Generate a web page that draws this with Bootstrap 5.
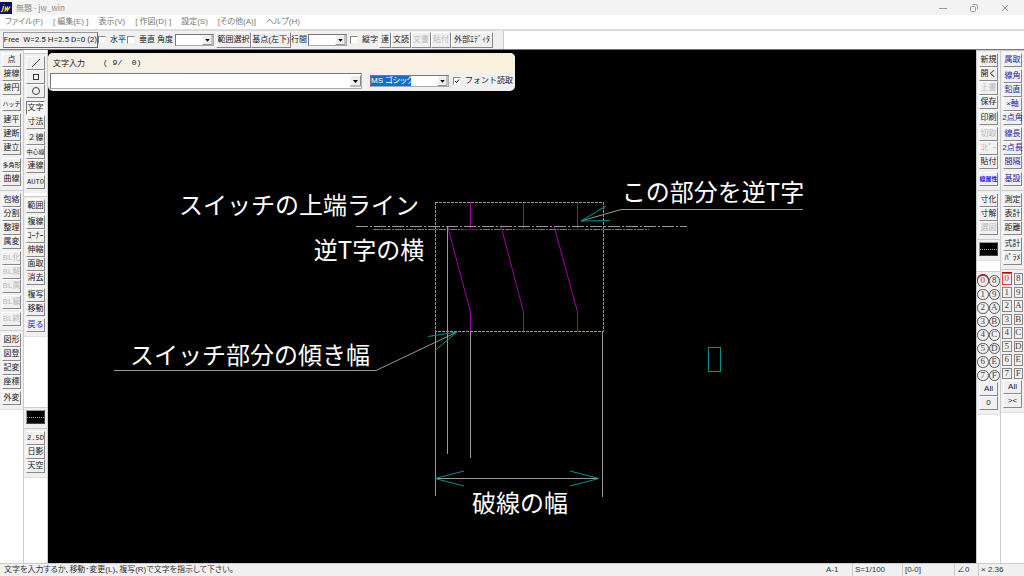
<!DOCTYPE html>
<html lang="ja">
<head>
<meta charset="utf-8">
<meta name="viewport" content="width=device-width, initial-scale=1">
<title>無題 - jw_win</title>
<link href="https://cdn.jsdelivr.net/npm/bootstrap@5.3.0/dist/css/bootstrap.min.css" rel="stylesheet">
<style>
  body { font: 8px/12px "Liberation Sans", "Noto Sans CJK JP", sans-serif; color: #222; background: #fff; }
  button, select, input { font: inherit; color: inherit; border-radius: 0; }
  .titlebar { height: 15px; background: #f3f3f3; color: #8c8c8c; font-family: "Noto Sans CJK JP", sans-serif; font-size: 8px; }
  .titlebar button { width: 31px; border: 0; padding: 0; background: none; line-height: 0; }
  .menubar { height: 14px; color: #777; gap: 10px; padding: 0 5px; font-size: 8px; font-feature-settings: "palt"; }
  .menubar a { color: inherit; text-decoration: none; white-space: pre; }

  /* bevelled push button used in every bar */
  .tool { display: flex; align-items: center; justify-content: center; height: 14px; padding: 0; white-space: nowrap; line-height: 12px;
    background: #f0f0f0; border: 1px solid; border-color: #fff #888 #888 #fff; }
  .tool:disabled { color: #bbb; }
  .tool.pressed { background: #f8f8f8; border-color: #777 #fff #fff #777; }
  .tight { font-size: 6px; }
  .fixed-pitch { font-family: "Liberation Mono", monospace; font-size: 7px; }
  .gap-above { margin-top: 2px; }
  .gap-above-3 { margin-top: 3px; }
  .ink-blue { color: #1c1ca8; }
  .ink-bright { color: #2020ff; }

  .topbar { height: 21px; border-top: 2px solid #dcdcdc; border-bottom: 1px solid #777; }
  .topbar-grid { display: grid; align-items: center; padding: 0 10px 0 3px; background: #f0f0f0; border-right: 1px solid #ccc;
    grid-template-columns: 95px 29px 30px 18px 41px 35px 40px 17px 42px 29px 12px 20px 20px 20px 42px; }
  .topbar .tool { height: 16px; }
  .topbar label { display: flex; align-items: center; gap: 4px; white-space: nowrap; }
  .text-style { font-family: Roboto, sans-serif; border-color: #999 #666 #666 #999; }
  .tick { appearance: none; flex: none; width: 8px; height: 8px; margin: 0; background: #fff; border: 1px solid; border-color: #888 #eee #eee #888; }
  .tick:checked { background: #fff url("data:image/svg+xml,%3Csvg xmlns='http://www.w3.org/2000/svg' viewBox='0 0 6 6'%3E%3Cpath d='M1 3l1.5 1.5L5 1.5' fill='none' stroke='%23000'/%3E%3C/svg%3E") center / contain no-repeat; }
  .combo { appearance: none; width: 39px; height: 12px; padding: 0; border: 1px solid; border-color: #777 #aaa #aaa #777; line-height: 10px;
    background: #fff url("data:image/svg+xml,%3Csvg xmlns='http://www.w3.org/2000/svg' viewBox='0 0 11 11'%3E%3Cpath d='M0 0h11v11H0z' fill='%23eee'/%3E%3Cpath d='M0 11V0h11' fill='none' stroke='%23fff'/%3E%3Cpath d='M0 10.5h10.5V0' fill='none' stroke='%23888'/%3E%3Cpath d='M3 4.500h5l-2.500 3z'/%3E%3C/svg%3E") right center / 11px 100% no-repeat; }

  .workspace { flex: 1; min-height: 0; }
  .side { width: 24px; border-right: 1px solid #ccc; }
  .side-right { border-right: 0; border-left: 1px solid #ccc; }
  .toolset { background: #f0f0f0; border-top: 1px solid #ccc; padding: 2px 2px 4px 2px; }
  .toolset .tool { width: 100%; }
  .spaced { margin-top: 3px; }
  .void { height: 70px; }
  .void-small { height: 10px; }
  .line-style { width: 100%; height: 14px; padding: 0; background: #000; border: 1px solid; border-color: #999 #444 #444 #999; display: flex; align-items: center; }
  .line-style span { width: 100%; border-top: 1px dotted #aaa; }
  .layers { display: grid; grid-template: repeat(8, minmax(0, 1fr)) / 1fr 1fr; height: 108px; margin: 0 -2px; font-family: "Liberation Serif", serif; font-size: 9px; }
  .layers button { min-height: 0; padding: 0; line-height: 9px; background: #f0f0f0; color: #444; border: 1px solid #888; margin: 1px; }
  .layers.round button { border-radius: 50%; border-color: #555; margin: 1px 0; }
  .layers .active { color: #e02020; border-color: #f04040; box-shadow: 0 -1px #c00000; }

  .stage { flex: 1; min-width: 0; background: #000; }
  .stage svg { width: 100%; height: 100%; display: block; }
  .stage text { font: 400 24px "Noto Sans CJK JP", sans-serif; fill: #fff; text-anchor: middle; }
  .text-dialog { top: 3px; left: 0; width: 467px; height: 38px; border-radius: 5px; background: #f0f0f0; overflow: hidden; }
  .dialog-title { height: 20px; padding: 0 5px; font-family: "Noto Sans CJK JP", sans-serif; background: linear-gradient(90deg, #f4f1e4, #faf0e6 60%, #f8f2dc); white-space: pre; }
  .char-count { font-family: "Liberation Mono", monospace; margin-left: 18px; }
  .dialog-row { padding: 0 2px; }
  .entry { width: 313px; height: 16px; }
  .font-pick { width: 79px; color: #fff; background-color: transparent; font-feature-settings: "palt"; }
  .font-wrap { background: linear-gradient(90deg, #0f6fd0 41px, #fff 41px); }

  .statusbar { height: 13px; background: #f0f0f0; border-top: 1px solid #ccc; font-feature-settings: "palt"; color: #333; }
  .statusbar div + div { border-left: 1px solid #ccc; padding-left: 2px; }
  .pane-a { width: 28px; }
  .pane-b { width: 50px; }
  .pane-c { width: 52px; }
  .pane-d { width: 24px; }
  .pane-e { width: 46px; }
</style>
</head>
<body>
<div class="d-flex flex-column vh-100 overflow-hidden">
  <header class="titlebar d-flex align-items-center">
    <svg width="12" height="12" viewBox="0 0 12 12" aria-hidden="true"><rect width="12" height="12" fill="#0a0a70"/><path d="M3.500 4L2.500 8.500Q2 10 .8 9.500M4 2.500v.8M5.500 4.500L5.200 8.500L7.500 5.500V8.500L10.200 4.500" fill="none" stroke="#f2e600" stroke-width="1.300"/></svg>
    <span class="ms-1 me-auto">無題 - jw_win</span>
    <button aria-label="最小化"><svg width="8" height="8"><path d="M0 4.500h8" stroke="#999"/></svg></button>
    <button aria-label="元に戻す"><svg width="8" height="8" fill="none" stroke="#999"><rect x=".5" y="2.500" width="5" height="5" rx="1"/><path d="M2.500 .5h3q2 0 2 2v3"/></svg></button>
    <button class="me-1" aria-label="閉じる"><svg width="8" height="8"><path d="M1 1l6 6M7 1l-6 6" stroke="#999"/></svg></button>
  </header>
  <nav class="menubar d-flex align-items-center">
    <a href="#">ファイル(F)</a><a href="#">[ 編集(E) ]</a><a href="#">表示(V)</a><a href="#">[ 作図(D) ]</a><a href="#">設定(S)</a><a href="#">[その他(A)]</a><a href="#">ヘルプ(H)</a>
  </nav>
  <div class="topbar d-flex">
    <div class="topbar-grid">
      <button class="tool text-style">Free&nbsp; W=2.5 H=2.5 D=0 (2)</button>
      <label><input class="tick" type="checkbox">水平</label>
      <label><input class="tick" type="checkbox">垂直</label>
      <label for="angle">角度</label>
      <select class="combo" id="angle"><option></option></select>
      <button class="tool">範囲選択</button>
      <button class="tool">基点(左下)</button>
      <label for="spacing">行間</label>
      <select class="combo" id="spacing"><option></option></select>
      <label><input class="tick" type="checkbox">縦字</label>
      <button class="tool">連</button>
      <button class="tool">文読</button>
      <button class="tool" disabled>文書</button>
      <button class="tool" disabled>貼付</button>
      <button class="tool">外部ｴﾃﾞｨﾀ</button>
    </div>
  </div>

  <div class="workspace d-flex">
    <aside class="side">
      <div class="toolset">
        <button class="tool">点</button>
        <button class="tool">接線</button>
        <button class="tool">接円</button>
        <button class="tool gap-above tight">ハッチ</button>
        <button class="tool gap-above">建平</button>
        <button class="tool">建断</button>
        <button class="tool">建立</button>
        <button class="tool gap-above-3 tight">多角形</button>
        <button class="tool">曲線</button>
      </div>
      <div class="toolset">
        <button class="tool">包絡</button>
        <button class="tool">分割</button>
        <button class="tool">整理</button>
        <button class="tool">属変</button>
        <button class="tool gap-above" disabled>BL化</button>
        <button class="tool" disabled>BL解</button>
        <button class="tool" disabled>BL属</button>
        <button class="tool gap-above" disabled>BL編</button>
        <button class="tool gap-above-3" disabled>BL終</button>
      </div>
      <div class="toolset border-bottom">
        <button class="tool">図形</button>
        <button class="tool">図登</button>
        <button class="tool">記変</button>
        <button class="tool">座標</button>
        <button class="tool gap-above">外変</button>
      </div>
    </aside>
    <aside class="side">
      <div class="toolset spaced">
        <button class="tool" aria-label="線"><svg width="10" height="10"><path d="M1 9L9 1" stroke="#444"/></svg></button>
        <button class="tool" aria-label="矩形"><svg width="10" height="10"><rect x="2.500" y="2.500" width="5" height="5" fill="none" stroke="#333"/></svg></button>
        <button class="tool" aria-label="円"><svg width="10" height="10"><circle cx="5" cy="5" r="3.500" fill="none" stroke="#444"/></svg></button>
        <button class="tool gap-above-3 pressed">文字</button>
        <button class="tool">寸法</button>
        <button class="tool gap-above">２線</button>
        <button class="tool tight">中心線</button>
        <button class="tool">連線</button>
        <button class="tool gap-above fixed-pitch">AUTO</button>
      </div>
      <div class="toolset spaced border-bottom">
        <button class="tool">範囲</button>
        <button class="tool gap-above">複線</button>
        <button class="tool">ｺｰﾅｰ</button>
        <button class="tool">伸縮</button>
        <button class="tool">面取</button>
        <button class="tool">消去</button>
        <button class="tool gap-above-3">複写</button>
        <button class="tool">移動</button>
        <button class="tool gap-above ink-bright">戻る</button>
      </div>
      <div class="void"></div>
      <div class="toolset"><button class="line-style" aria-label="線属性"><span></span></button></div>
      <div class="toolset border-bottom">
        <button class="tool fixed-pitch">2.5D</button>
        <button class="tool">日影</button>
        <button class="tool">天空</button>
      </div>
    </aside>

    <main class="stage position-relative">
      <svg viewBox="48 50 928 513" fill="none">
        <g stroke="#a000a0">
          <path d="M470.500 202V229M523.500 202V229M577.500 202V229"/>
          <path d="M447.500 226L470.500 312V331M501 226L523.500 312V331M554 226L577.500 312V331"/>
        </g>
        <g stroke="#999">
          <path d="M356 226.500H687" stroke-dasharray="12 2 2 2"/>
          <path d="M373 229.500H649" stroke-dasharray="7 1 2 1" stroke="#777"/>
          <path d="M435 202.500H603.500V331.500H435.500V202" stroke-dasharray="3 1"/>
          <path d="M447.500 226V454M470.500 332V458M435.500 332V496M602.500 332V497M435 478.500H599"/>
          <path d="M114 370.500H376L457 332M803 209.500H621L581 221"/>
        </g>
        <path d="M463 229.500H480M516 229.500H532M569 229.500H585" stroke="#700070"/>
        <g stroke="#089090">
          <path d="M464 471L435 478.500L464 486M570 471L599 478.500L570 486M428 336.500L457 332L435 350.500M606 206L581 221L610 220.500"/>
          <rect x="708.500" y="347.500" width="12" height="24"/>
        </g>
        <text x="299" y="214">スイッチの上端ライン</text>
        <text x="713" y="201">この部分を逆T字</text>
        <text x="369" y="259">逆T字の横</text>
        <text x="250" y="364">スイッチ部分の傾き幅</text>
        <text x="520" y="512">破線の幅</text>
      </svg>
      <section class="text-dialog position-absolute">
        <div class="dialog-title d-flex align-items-center"><label for="entry">文字入力</label><span class="char-count">( 9/  0)</span></div>
        <div class="dialog-row d-flex align-items-center">
          <select class="combo entry" id="entry"><option></option></select>
          <div class="font-wrap d-flex ms-2 me-1"><select class="combo font-pick" aria-label="フォント"><option>MS ゴシック</option></select></div>
          <label class="d-flex align-items-center text-nowrap"><input class="tick me-1" type="checkbox" checked>フォント読取</label>
        </div>
      </section>
    </main>

    <aside class="side side-right">
      <div class="toolset">
        <button class="tool">新規</button>
        <button class="tool">開く</button>
        <button class="tool" disabled>上書</button>
        <button class="tool">保存</button>
        <button class="tool gap-above">印刷</button>
        <button class="tool gap-above" disabled>切取</button>
        <button class="tool" disabled>ｺﾋﾟｰ</button>
        <button class="tool">貼付</button>
        <button class="tool gap-above-3 tight ink-bright fw-bold">線属性</button>
      </div>
      <div class="toolset">
        <button class="tool">寸化</button>
        <button class="tool">寸解</button>
        <button class="tool" disabled>選図</button>
      </div>
      <div class="toolset border-bottom"><button class="line-style" aria-label="線種"><span></span></button></div>
      <div class="void-small"></div>
      <div class="toolset border-bottom">
        <div class="layers round">
          <button class="active">0</button><button>8</button><button>1</button><button>9</button>
          <button>2</button><button>A</button><button>3</button><button>B</button>
          <button>4</button><button>C</button><button>5</button><button>D</button>
          <button>6</button><button>E</button><button>7</button><button>F</button>
        </div>
        <button class="tool">All</button>
        <button class="tool">0</button>
      </div>
    </aside>
    <aside class="side side-right">
      <div class="toolset ink-blue">
        <button class="tool">属取</button>
        <button class="tool gap-above">線角</button>
        <button class="tool">鉛直</button>
        <button class="tool">×軸</button>
        <button class="tool">2点角</button>
        <button class="tool gap-above">線長</button>
        <button class="tool">2点長</button>
        <button class="tool">間隔</button>
        <button class="tool gap-above-3">基設</button>
      </div>
      <div class="toolset">
        <button class="tool">測定</button>
        <button class="tool">表計</button>
        <button class="tool">距離</button>
        <button class="tool gap-above">式計</button>
        <button class="tool">ﾊﾟﾗﾒ</button>
      </div>
      <div class="toolset border-bottom">
        <div class="layers">
          <button class="active">0</button><button>8</button><button>1</button><button>9</button>
          <button>2</button><button>A</button><button>3</button><button>B</button>
          <button>4</button><button>C</button><button>5</button><button>D</button>
          <button>6</button><button>E</button><button>7</button><button>F</button>
        </div>
        <button class="tool">All</button>
        <button class="tool">&gt;&lt;</button>
      </div>
    </aside>
  </div>

  <footer class="statusbar d-flex align-items-center">
    <div class="ps-1 me-auto">文字を入力するか、移動･変更(L)、複写(R)で文字を指示して下さい。</div>
    <div class="pane-a border-0">A-1</div>
    <div class="pane-b">S=1/100</div>
    <div class="pane-c">[0-0]</div>
    <div class="pane-d">∠0</div>
    <div class="pane-e">× 2.36</div>
  </footer>
</div>
<script src="https://cdn.jsdelivr.net/npm/bootstrap@5.3.0/dist/js/bootstrap.bundle.min.js"></script>
</body>
</html>
